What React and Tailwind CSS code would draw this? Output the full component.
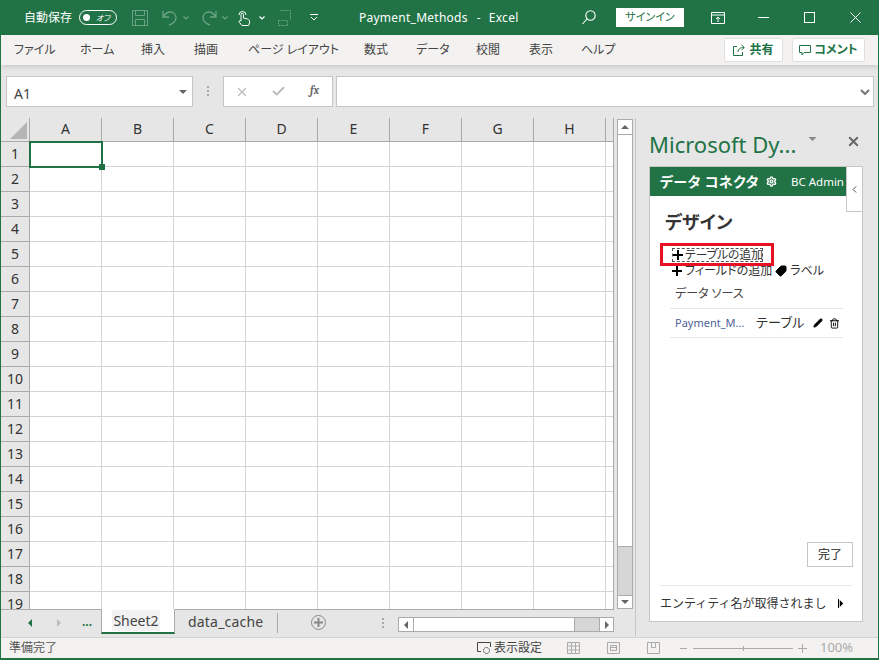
import { Pencil, Trash2, Settings, Tag, X, Check, ChevronLeft } from 'lucide-react';

const columns = ['A', 'B', 'C', 'D', 'E', 'F', 'G', 'H'];
const rows = Array.from({ length: 19 }, (_, i) => i + 1);
const menus = [
  ['ファイル', 'w-[66px]'],
  ['ホーム', 'w-[61px]'],
  ['挿入', 'w-[53px]'],
  ['描画', 'w-[54px]'],
  ['ページ レイアウト', 'w-[116px]'],
  ['数式', 'w-[52px]'],
  ['データ', 'w-[60px]'],
  ['校閲', 'w-[53px]'],
  ['表示', 'w-[52px]'],
  ['ヘルプ', 'w-[60px]'],
];

const Triangle = ({ dir = 'down', className = '' }) => {
  const points = { down: '0,0 8,0 4,4', up: '0,4 8,4 4,0', left: '4,0 4,8 0,4', right: '0,0 0,8 4,4' }[dir];
  const box = dir === 'down' || dir === 'up' ? '0 0 8 4' : '0 0 4 8';
  return (
    <svg viewBox={box} className={className}>
      <polygon points={points} fill="currentColor" />
    </svg>
  );
};

const Caret = ({ className = '' }) => (
  <svg viewBox="0 0 6 4" className={`h-[4px] w-[6px] ${className}`} fill="none" stroke="currentColor" strokeWidth="1.200">
    <path d="M.5.500 3 3l2.500-2.500" />
  </svg>
);

const PlusMark = () => (
  <svg viewBox="0 0 10 10" className="h-[10px] w-[10px] shrink-0 text-black">
    <path d="M4 0h2v4h4v2H6v4H4V6H0V4h4z" fill="currentColor" />
  </svg>
);

const Dots = ({ className = '' }) => (
  <div className={`flex flex-col gap-[2px] ${className}`}>
    <span className="h-[2px] w-[2px] bg-[#aaa]" />
    <span className="h-[2px] w-[2px] bg-[#aaa]" />
    <span className="h-[2px] w-[2px] bg-[#aaa]" />
  </div>
);

const TitleBar = () => (
  <div className="flex h-[35px] shrink-0 items-center bg-[#217346] text-white">
    <span className="ml-[23px] w-[48px] text-[12px] whitespace-nowrap">自動保存</span>
    <div className="ml-[7px] flex h-[15px] w-[38px] items-center rounded-full border border-white px-[3px]">
      <span className="h-[7px] w-[7px] rounded-full bg-white" />
      <span className="ml-[6px] text-[8px] leading-none italic">オフ</span>
    </div>
    {/* quick access icons */}
    <svg viewBox="0 0 16 16" className="ml-[15px] h-[16px] w-[16px] text-[#6ba386]" fill="none" stroke="currentColor">
      <path d="M.5.500h15v15H.5zM3.500.5v5h9v-5M3.500 15.500v-6h9v6" />
    </svg>
    <svg viewBox="0 0 16 16" className="ml-[14px] h-[16px] w-[16px] text-[#6ba386]" fill="none" stroke="currentColor" strokeWidth="1.300">
      <path d="M1 1v6h6M1 7c2-3 4-5 7-5 4 0 6 3 6 6 0 3-3 6-7 7" />
    </svg>
    <Caret className="ml-[5px] text-[#6ba386]" />
    <svg viewBox="0 0 16 16" className="ml-[12px] h-[16px] w-[16px] text-[#6ba386]" fill="none" stroke="currentColor" strokeWidth="1.300">
      <path d="M15 1v6H9M15 7c-2-3-4-5-7-5-4 0-6 3-6 6 0 3 3 6 7 7" />
    </svg>
    <Caret className="ml-[5px] text-[#6ba386]" />
    <svg viewBox="0 0 12 16" className="ml-[10px] h-[16px] w-[12px]" fill="none" stroke="currentColor" strokeWidth="1">
      <path d="M1 5a3.500 3.500 0 0 1 7 0M3 11V4.500a1.200 1.200 0 0 1 2.500 0V8l4 1c1 .3 2 1 2 2v2l-1 2.500H4L1.200 12c-.7-1 .6-2.200 1.800-1z" />
    </svg>
    <Caret className="ml-[9px]" />
    <svg viewBox="0 0 16 18" className="ml-[12px] h-[18px] w-[16px] text-[#6ba386]" fill="none" stroke="currentColor" strokeDasharray="2 1">
      <path d="M3.500 1.500h10v9M1.500 11.500h9v5h-9z" />
    </svg>
    <svg viewBox="0 0 8 7" className="ml-[17px] h-[7px] w-[8px]" fill="none" stroke="currentColor">
      <path d="M0 .5h8M1 3l3 3 3-3" />
    </svg>
    <span className="ml-[41px] w-[158px] text-[12px] tracking-[0.25px] whitespace-nowrap">
      Payment_Methods<span className="mr-[8px] ml-[9px]">-</span>Excel
    </span>
    <svg viewBox="0 0 14 15" className="ml-[65px] h-[15px] w-[14px]" fill="none" stroke="currentColor" strokeWidth="1.100">
      <circle cx="8.500" cy="5.500" r="4.700" />
      <path d="M5 9 .5 14" />
    </svg>
    <div className="ml-[20px] flex h-[19px] w-[68px] items-center justify-center bg-white text-[11px] text-[#217346]">サインイン</div>
    <svg viewBox="0 0 14 12" className="ml-[27px] h-[12px] w-[14px]" fill="none" stroke="currentColor">
      <path d="M.5.500h13v11H.5zM.5 3h13M7 10V5M5 7l2-2 2 2" />
    </svg>
    <span className="ml-[33px] h-px w-[11px] bg-white" />
    <span className="ml-[35px] h-[11px] w-[11px] border border-white" />
    <svg viewBox="0 0 11 11" className="ml-[35px] h-[11px] w-[11px]" fill="none" stroke="currentColor">
      <path d="m.5.500 10 10M10.500.5l-10 10" />
    </svg>
  </div>
);

const MenuBar = () => (
  <div className="relative z-10 flex h-[30px] shrink-0 items-center bg-[#f3f2f1] pl-[6px] text-[12px] text-[#444] shadow-[0_2px_4px_rgba(0,0,0,0.12)]">
    {menus.map(([label, width]) => (
      <span key={label} className={`${width} pl-[7px] whitespace-nowrap`}>{label}</span>
    ))}
    <div className="ml-[90px] flex h-[24px] w-[59px] items-center justify-center gap-[4px] rounded-[2px] border border-[#e1dfdd] bg-white text-[12px] font-bold text-[#217346]">
      <svg viewBox="0 0 12 12" className="h-[12px] w-[12px]" fill="none" stroke="currentColor">
        <path d="M4 2.500H.5v9h9V8M5 8c0-3 2-4.500 6-4.500M8.500.8 11.300 3.500 8.500 6" />
      </svg>
      共有
    </div>
    <div className="ml-[9px] flex h-[24px] w-[73px] items-center justify-center gap-[3px] rounded-[2px] border border-[#e1dfdd] bg-white text-[12px] font-bold text-[#217346]">
      <svg viewBox="0 0 12 12" className="h-[12px] w-[12px]" fill="none" stroke="currentColor">
        <path d="M.5 1.500h11v7H5L3 11V8.500H.5z" />
      </svg>
      コメント
    </div>
  </div>
);

const FormulaBar = () => (
  <div className="flex h-[53px] shrink-0 items-start bg-[#e6e6e6] pt-[11px] pl-[5px]">
    <div className="flex h-[31px] w-[187px] items-center border border-[#c6c6c6] bg-white pr-[5px] pl-[7px] text-[14px] text-[#444]">
      <span className="flex-1 pt-[3px]">A1</span>
      <Triangle className="h-[4px] w-[8px] text-[#666]" />
    </div>
    <Dots className="mx-[14px] mt-[10px]" />
    <div className="flex h-[31px] w-[110px] items-center border border-[#c6c6c6] bg-white">
      <X size={14} strokeWidth={2} className="ml-[11px] text-[#bbb]" />
      <Check size={15} strokeWidth={3} className="ml-[22px] text-[#bbb]" />
      <span className="ml-[24px] font-serif text-[11px] font-bold text-[#666] italic">fx</span>
    </div>
    <div className="ml-[3px] flex h-[31px] w-[538px] items-center justify-end border border-[#c6c6c6] bg-white pr-[3px]">
      <svg viewBox="0 0 10 6" className="h-[6px] w-[10px] text-[#777]" fill="none" stroke="currentColor" strokeWidth="2">
        <path d="m1 1 4 4 4-4" />
      </svg>
    </div>
  </div>
);

const Grid = () => (
  <div className="h-[492px] w-[613px] overflow-hidden border-r border-b border-[#ababab] bg-white" style={{ fontFamily: '"Noto Sans", sans-serif' }}>
    <div className="flex h-[24px] bg-[#e6e6e6]">
      <div className="flex w-[29px] shrink-0 items-end justify-end border-r border-b border-[#ababab] p-[2px]">
        <div className="h-0 w-0 border-b-[17px] border-l-[17px] border-b-[#b5b5b5] border-l-transparent" />
      </div>
      {columns.map((col) => (
        <div key={col} className="flex w-[72px] shrink-0 items-center justify-center border-r border-b border-[#ababab] pb-[2px] text-[14px] text-[#333]">
          {col}
        </div>
      ))}
      <div className="flex-1 border-b border-[#ababab]" />
    </div>
    {rows.map((row) => (
      <div key={row} className="flex h-[25px]">
        <div className="flex w-[29px] shrink-0 items-center justify-center border-r border-b border-[#ababab] bg-[#e6e6e6] pb-[1px] text-[14px] text-[#333]">
          {row}
        </div>
        {columns.map((col) => (
          <div key={col} className="relative w-[72px] shrink-0 border-r border-b border-[#d4d4d4]">
            {row === 1 && col === 'A' && (
              <div className="absolute -top-[1px] -left-[1px] z-10 h-[27px] w-[74px] border-2 border-[#217346]">
                <span className="absolute -right-[4px] -bottom-[4px] h-[6px] w-[6px] bg-[#217346]" />
              </div>
            )}
          </div>
        ))}
        <div className="flex-1 border-b border-[#d4d4d4]" />
      </div>
    ))}
  </div>
);

const VerticalScroll = () => (
  <div className="mt-[1px] ml-[3px] flex h-[490px] w-[16px] flex-col border-x border-[#ababab] bg-[#d6d6d6]">
    <div className="flex h-[16px] items-center justify-center border-y border-[#ababab] bg-white">
      <Triangle dir="up" className="h-[4px] w-[8px] text-[#666]" />
    </div>
    <div className="h-[412px] border-b border-[#ababab] bg-white" />
    <div className="flex-1" />
    <div className="flex h-[14px] items-center justify-center border-y border-[#ababab] bg-white">
      <Triangle className="h-[4px] w-[8px] text-[#666]" />
    </div>
  </div>
);

const Panel = () => (
  <div className="ml-[2px] flex h-[518px] w-[243px] flex-col border-l border-[#c6c6c6] pl-[13px]">
    <div className="flex h-[48px] shrink-0 items-start pt-[11px]">
      <span className="w-[151px] text-[22px] leading-[30px] whitespace-nowrap text-[#217346]">Microsoft Dy...</span>
      <Triangle className="mt-[8px] ml-[8px] h-[4px] w-[9px] text-[#888]" />
      <X size={15} strokeWidth={3} className="mt-[5px] ml-[29px] text-[#666]" />
    </div>
    <div className="relative flex h-[456px] w-[214px] flex-col border border-[#c6c6c6] bg-white">
      <div className="flex h-[29px] w-[197px] items-center bg-[#217346] pl-[10px] text-white">
        <span className="w-[101px] text-[14px] font-bold tracking-[0.4px] whitespace-nowrap">データ コネクタ</span>
        <Settings size={11} strokeWidth={3} className="ml-[5px]" />
        <span className="ml-[14px] text-[11.500px] whitespace-nowrap">BC Admin</span>
      </div>
      <div className="absolute top-0 right-0 flex h-[45px] w-[16px] items-center justify-center border-b border-l border-[#c6c6c6] bg-white">
        <ChevronLeft size={11} strokeWidth={2} className="text-[#444]" />
      </div>
      <div className="flex flex-1 flex-col">
        <h2 className="mt-[14px] ml-[15px] text-[18px] leading-[24px] font-bold text-[#333]">デザイン</h2>
        <div className="relative mt-[14px] ml-[22px] flex h-[14px] w-[91px] items-center border border-dashed border-[#555] text-[11.800px] whitespace-nowrap text-[#333]">
          <PlusMark />
          <span className="ml-[2px]">テーブルの追加</span>
          <div className="absolute -top-[6px] -left-[13px] h-[23px] w-[114px] border-[3px] border-[#e81123]" />
        </div>
        <div className="mt-[1px] ml-[22px] flex h-[16px] items-center text-[12px] whitespace-nowrap text-[#333]">
          <PlusMark />
          <span className="ml-[3px]">フィールドの追加</span>
          <Tag size={12} fill="currentColor" className="ml-[3px] -scale-x-100 text-black" />
          <span className="ml-[3px]">ラベル</span>
        </div>
        <div className="mt-[6px] ml-[25px] h-[23px] text-[12px] leading-[18px] text-[#444]">データ ソース</div>
        <div className="ml-[20px] flex h-[30px] w-[173px] shrink-0 items-center border-y border-[#e6e6e6]">
          <span className="ml-[5px] w-[81px] text-[11px] whitespace-nowrap text-[#4e5f99]">Payment_M...</span>
          <span className="w-[50px] text-[13px] tracking-[0.3px] whitespace-nowrap text-[#333]">テーブル</span>
          <Pencil size={10} fill="currentColor" className="ml-[7px] text-black" />
          <Trash2 size={11} className="ml-[6px] text-black" />
        </div>
        <div className="mt-auto mr-[9px] mb-[18px] flex h-[25px] w-[46px] items-center justify-center self-end border border-[#c6c6c6] text-[12px] text-[#222]">
          完了
        </div>
        <div className="mx-[10px] flex h-[36px] items-center border-t border-[#e6e6e6] text-[12px] whitespace-nowrap text-[#333]">
          <span className="w-[178px] [font-feature-settings:normal]">エンティティ名が取得されまし</span>
          <span className="h-[9px] w-px bg-black" />
          <Triangle dir="right" className="h-[7px] w-[5px] text-black" />
        </div>
      </div>
    </div>
  </div>
);

const SheetTabs = () => (
  <div className="flex h-[27px] items-start text-[14px] text-[#444]">
    <Triangle dir="left" className="mt-[9px] ml-[27px] h-[8px] w-[4px] text-[#217346]" />
    <Triangle dir="right" className="mt-[9px] ml-[25px] h-[8px] w-[4px] text-[#bbb]" />
    <span className="ml-[21px] w-[19px] pt-[5px] text-[12px] leading-[14px] font-bold text-[#217346]">...</span>
    <div className="relative -mt-[1px] flex h-[25px] w-[74px] items-center justify-center border-x border-b-2 border-[#ababab] border-b-[#217346] bg-white pr-[4px]">
      <span className="bg-[#f2f2f2] px-[1px]">Sheet2</span>
    </div>
    <span className="w-[102px] pt-[2px] pl-[13px] leading-[20px] tracking-[0.2px] whitespace-nowrap">data_cache</span>
    <span className="mt-[3px] h-[20px] w-px bg-[#ababab]" />
    <div className="mt-[5px] ml-[33px] flex h-[15px] w-[15px] items-center justify-center rounded-full border-[1.500px] border-[#888]">
      <svg viewBox="0 0 9 9" className="h-[9px] w-[9px] text-[#888]">
        <path d="M3.500 0h2v3.500H9v2H5.500V9h-2V5.500H0v-2h3.500z" fill="currentColor" />
      </svg>
    </div>
    <Dots className="mt-[8px] ml-[56px]" />
    <div className="mt-[7px] ml-[14px] flex h-[15px] w-[216px] border border-[#ababab] bg-[#d6d6d6]">
      <div className="flex w-[15px] items-center justify-center border-r border-[#ababab] bg-white">
        <Triangle dir="left" className="h-[8px] w-[4px] text-[#666]" />
      </div>
      <div className="w-[161px] border-r border-[#ababab] bg-white" />
      <div className="flex-1" />
      <div className="flex w-[14px] items-center justify-center border-l border-[#ababab] bg-white">
        <Triangle dir="right" className="h-[8px] w-[4px] text-[#666]" />
      </div>
    </div>
  </div>
);

const StatusBar = () => (
  <div className="flex h-[21px] shrink-0 items-center border-t border-[#d4d4d4] bg-[#f3f2f1] text-[12px] text-[#555]">
    <span className="ml-[8px] w-[468px]">準備完了</span>
    <svg viewBox="0 0 16 14" className="h-[14px] w-[16px] text-[#444]" fill="none" stroke="currentColor">
      <path d="M4 10.500H.5v-9h13V6" />
      <circle cx="9.500" cy="9.500" r="3" strokeDasharray="1.500 .8" />
    </svg>
    <span className="ml-[1px] w-[60px] whitespace-nowrap text-[#444]">表示設定</span>
    <svg viewBox="0 0 13 12" className="ml-[13px] h-[12px] w-[13px] text-[#aaa]" fill="none" stroke="currentColor">
      <path d="M.5.500h12v11H.5zM.5 4h12M.5 8h12M4.500.5v11M8.500.5v11" />
    </svg>
    <svg viewBox="0 0 13 12" className="ml-[27px] h-[12px] w-[13px] text-[#aaa]" fill="none" stroke="currentColor">
      <path d="M.5.500h12v11H.5zM3.500 3.500h6v5h-6zM3.500 5.500h6" />
    </svg>
    <svg viewBox="0 0 13 12" className="ml-[27px] h-[12px] w-[13px] text-[#aaa]" fill="none" stroke="currentColor">
      <path d="M.5.500h12v11H.5zM4.500.5v5h4v-5" />
    </svg>
    <span className="ml-[20px] h-px w-[7px] bg-[#aaa]" />
    <div className="ml-[6px] flex h-[5px] w-[100px] items-center justify-center bg-[linear-gradient(#aaa,#aaa)] bg-[length:100%_1px] bg-center bg-no-repeat">
      <span className="h-[5px] w-px bg-[#aaa]" />
    </div>
    <svg viewBox="0 0 9 9" className="ml-[5px] h-[9px] w-[9px] text-[#aaa]" fill="none" stroke="currentColor">
      <path d="M4.500 0v9M0 4.500h9" />
    </svg>
    <span className="ml-[13px] text-[13px] text-[#aaa]">100%</span>
  </div>
);

export default function App() {
  return (
    <div
      className="flex h-[660px] w-[879px] flex-col overflow-hidden border-x border-b-2 border-[#217346] bg-[#e6e6e6] [font-feature-settings:'palt'] [font-family:'Noto_Sans','Noto_Sans_CJK_JP',sans-serif]"
    >
      <TitleBar />
      <MenuBar />
      <FormulaBar />
      <div className="flex h-[519px] shrink-0">
        <div className="flex w-[632px] shrink-0 flex-col">
          <div className="flex">
            <Grid />
            <VerticalScroll />
          </div>
          <SheetTabs />
        </div>
        <Panel />
      </div>
      <StatusBar />
    </div>
  );
}
